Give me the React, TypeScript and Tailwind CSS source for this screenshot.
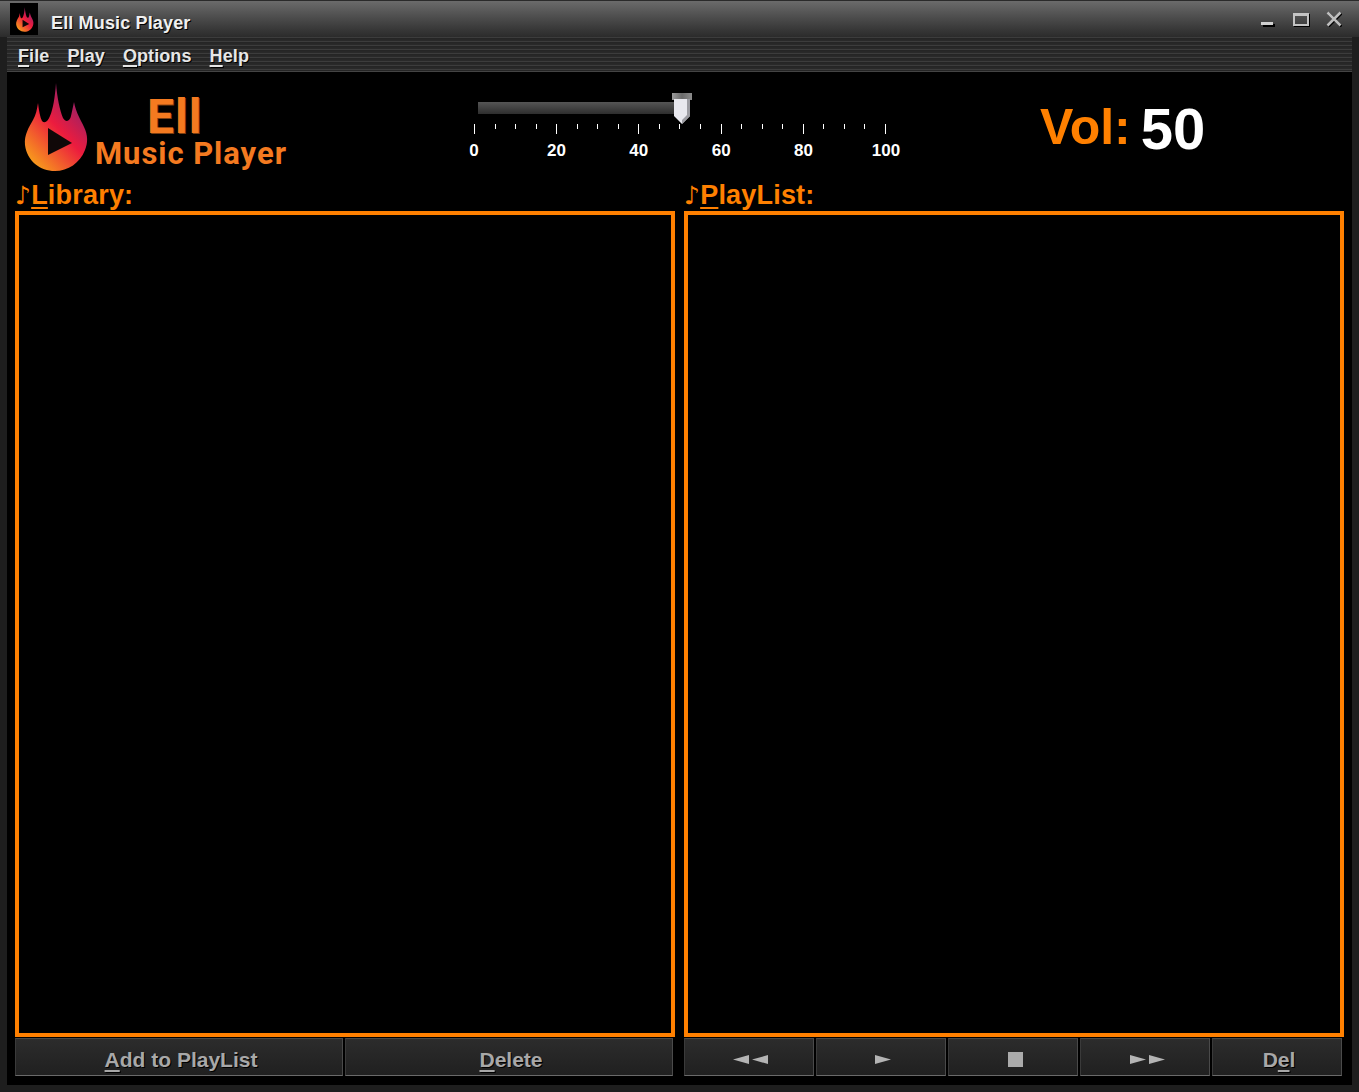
import React from 'react';

const FONT = "font-['Liberation_Sans',Arial,sans-serif]";

const Flame = ({ id, className }: { id: string; className: string }) => (
  <svg viewBox="0 0 90 100" className={className}>
    <defs>
      <linearGradient id={id} x1="0.2" y1="0.95" x2="0.8" y2="0.15">
        <stop offset="0" stopColor="#f7981d" />
        <stop offset="0.55" stopColor="#ec1c3e" />
        <stop offset="1" stopColor="#962068" />
      </linearGradient>
    </defs>
    <path
      d="M46 8 C47 22 50 36 53 43 C56 48 60 46 61 41 C62 36 63 32 64 27 C66 38 71 45 74 52 C78 60 78 68 75 75 C70 88 58 96 45 96 C30 96 17 86 15 70 C14 60 19 52 23 45 C26 40 27 34 28 28 C29 36 30 42 32 46 C35 49 38 46 40 41 C43 34 45 22 46 8 Z"
      fill={`url(#${id})`}
    />
    <path d="M38 53 L62 68 L38 80 Z" fill="#100808" />
  </svg>
);

const Key = ({ children }: { children: React.ReactNode }) => (
  <span className="underline decoration-2 underline-offset-[3px]">{children}</span>
);

const Note = () => <span className="font-['DejaVu_Sans',sans-serif] text-[25px] font-bold">♪</span>;

const ticks = Array.from({ length: 21 }, (_, i) => i);
const labels = ['0', '20', '40', '60', '80', '100'];

const ActionButton = ({ children, className }: { children: React.ReactNode; className: string }) => (
  <button
    className={`${className} h-[38px] flex items-center justify-center border border-t-[#484848] border-l-[#3a3a3a] border-r-[#4a4a4a] border-b-[#6a6a6a] bg-gradient-to-b from-[#2c2c2c] to-[#202020] pt-[5px] pl-[4px] text-[21px] font-bold text-[#a8a8a8] [text-shadow:1px_1px_0_#000]`}
  >
    {children}
  </button>
);

export default function App() {
  return (
    <div className={`${FONT} flex h-[1092px] w-[1359px] flex-col overflow-hidden bg-[#1e1e1e]`}>
      {/* title bar */}
      <div className="flex h-[37px] shrink-0 items-center border-t border-[#2a2a2a] bg-gradient-to-b from-[#6b6b6b] to-[#2b2b2b]">
        <div className="ml-[10px] flex h-[32px] w-[28px] items-center justify-center bg-black">
          <Flame id="flame-small" className="h-[28px] w-[25px]" />
        </div>
        <span className="mt-[8px] ml-[13px] text-[18px] font-bold tracking-[0.15px] text-[#f0f0f0] [text-shadow:1px_1px_0_#000]">
          Ell Music Player
        </span>
        <div className="mr-[17px] ml-auto flex items-center">
          <div className="mt-[8px] h-[3px] w-[12px] bg-[#d0d0d0] shadow-[2px_2px_0_#000]" />
          <div className="ml-[20px] h-[13px] w-[16px] border-2 border-t-[3px] border-[#c4c4c4] shadow-[1px_1px_0_#000]" />
          <svg viewBox="0 0 16 16" className="ml-[17px] h-[16px] w-[16px]">
            <path d="M1.5 1.5 L14.5 14.5 M14.5 1.5 L1.5 14.5" stroke="#000" strokeWidth="2.5" transform="translate(1 1)" />
            <path d="M1.5 1.5 L14.5 14.5 M14.5 1.5 L1.5 14.5" stroke="#bdbdbd" strokeWidth="2.5" />
          </svg>
        </div>
      </div>

      <div className="flex min-h-0 flex-1 flex-col px-[7px] pb-[7px]">
        {/* menu bar */}
        <div className="flex h-[35px] shrink-0 items-center gap-[18px] border-b border-[#444] bg-[repeating-linear-gradient(180deg,#3c3c3c_0,#3c3c3c_1px,#242424_1px,#2a2a2a_4px)] pt-[4px] pl-[11px] text-[18px] font-bold tracking-[0.1px] text-[#e6e6e6] [text-shadow:1px_1px_0_#000]">
          <span><Key>F</Key>ile</span>
          <span><Key>P</Key>lay</span>
          <span><Key>O</Key>ptions</span>
          <span><Key>H</Key>elp</span>
        </div>

        <div className="flex min-h-0 flex-1 flex-col bg-black pl-[8px] pr-[7px]">
          {/* header with logo, volume slider and readout */}
          <div className="flex h-[108px] shrink-0">
            <div className="flex w-[290px] shrink-0">
              <Flame id="flame-big" className="mt-[3px] -ml-[5px] h-[100px] w-[90px] shrink-0" />
              <div className="mt-[22px] -ml-[5px] flex flex-col">
                <span className="ml-[52px] font-['Roboto',sans-serif] text-[48px] leading-[46px] font-bold tracking-[1px] text-[#f47a20] [text-shadow:1px_1px_0_#7a3d10]">
                  Ell
                </span>
                <span className="-mt-[1px] font-['Roboto',sans-serif] text-[31px] leading-[30px] font-bold tracking-[0.95px] whitespace-nowrap text-[#f47a20]">
                  Music Player
                </span>
              </div>
            </div>

            <div className="ml-[157px] w-[432px] shrink-0 pt-[20px]">
              <div className="relative ml-[16px] h-[24px] w-[400px] pt-[10px]">
                <div className="h-[12px] w-[200px] bg-gradient-to-b from-[#555] to-[#2e2e2e]" />
                <svg viewBox="0 0 20 32" className="absolute top-[1px] left-[194px] h-[32px] w-[20px]">
                  <defs>
                    <linearGradient id="thumb-cap" x1="0" y1="0" x2="1" y2="0">
                      <stop offset="0" stopColor="#9a9a9a" />
                      <stop offset="0.5" stopColor="#6a6a6a" />
                      <stop offset="1" stopColor="#8c8c8c" />
                    </linearGradient>
                  </defs>
                  <path d="M0 0 H20 V7 H0 Z" fill="url(#thumb-cap)" />
                  <path d="M2 6 H18 V23 L10 31 L2 23 Z" fill="#e8e8ee" />
                  <path d="M15 6 H18 V23 L10 31 L10 27 L15 22 Z" fill="#9c9ca2" />
                </svg>
              </div>
              <div className="mt-[8px] ml-[12px] flex h-[11px] w-[412px] items-start justify-between">
                {ticks.map((t) => (
                  <div key={t} className={t % 4 === 0 ? 'h-[10px] w-px bg-white' : 'h-[5px] w-px bg-white'} />
                ))}
              </div>
              <div className="mt-[6px] -ml-[8px] flex w-[452px] justify-between text-[17px] leading-[20px] font-bold text-white">
                {labels.map((l) => (
                  <span key={l} className="w-[40px] text-center">{l}</span>
                ))}
              </div>
            </div>

            <div className="ml-[146px] flex items-start">
              <span className="mt-[20px] text-[50px] leading-[70px] font-bold text-[#ff8000]">Vol:</span>
              <span className="mt-[22px] ml-[10px] text-[58px] leading-[70px] font-bold text-white">50</span>
            </div>
          </div>

          {/* library and playlist */}
          <div className="flex min-h-0 flex-1 gap-[9px]">
            <div className="flex w-[660px] flex-col">
              <div className="h-[31px] pt-[1px] text-[27px] leading-[28px] font-bold tracking-[0.2px] whitespace-nowrap text-[#ff8000]">
                <Note /><Key>L</Key>ibrary:
              </div>
              <div className="h-[826px] border-4 border-[#ff8000]" />
              <div className="mt-px flex gap-[2px]">
                <ActionButton className="w-[328px]"><span><Key>A</Key>dd to PlayList</span></ActionButton>
                <ActionButton className="w-[328px]"><span><Key>D</Key>elete</span></ActionButton>
              </div>
            </div>
            <div className="flex w-[660px] flex-col">
              <div className="h-[31px] pt-[1px] text-[27px] leading-[28px] font-bold tracking-[0.2px] whitespace-nowrap text-[#ff8000]">
                <Note /><Key>P</Key>layList:
              </div>
              <div className="h-[826px] border-4 border-[#ff8000]" />
              <div className="mt-px flex gap-[2px]">
                <ActionButton className="w-[130px]">
                  <svg viewBox="0 0 36 9" className="h-[9px] w-[36px]"><path d="M0 4.5 L16 0 V9 Z M19 4.5 L35 0 V9 Z" fill="#b4b4b4" /></svg>
                </ActionButton>
                <ActionButton className="w-[130px]">
                  <svg viewBox="0 0 17 9" className="h-[9px] w-[17px]"><path d="M0 0 L16 4.5 L0 9 Z" fill="#b4b4b4" /></svg>
                </ActionButton>
                <ActionButton className="w-[130px]">
                  <div className="h-[15px] w-[15px] bg-[#ababab]" />
                </ActionButton>
                <ActionButton className="w-[130px]">
                  <svg viewBox="0 0 36 9" className="h-[9px] w-[36px]"><path d="M1 0 L17 4.5 L1 9 Z M20 0 L36 4.5 L20 9 Z" fill="#b4b4b4" /></svg>
                </ActionButton>
                <ActionButton className="w-[130px]"><span>D<Key>e</Key>l</span></ActionButton>
              </div>
            </div>
          </div>
          <div className="h-[9px] shrink-0" />
        </div>
      </div>
    </div>
  );
}
